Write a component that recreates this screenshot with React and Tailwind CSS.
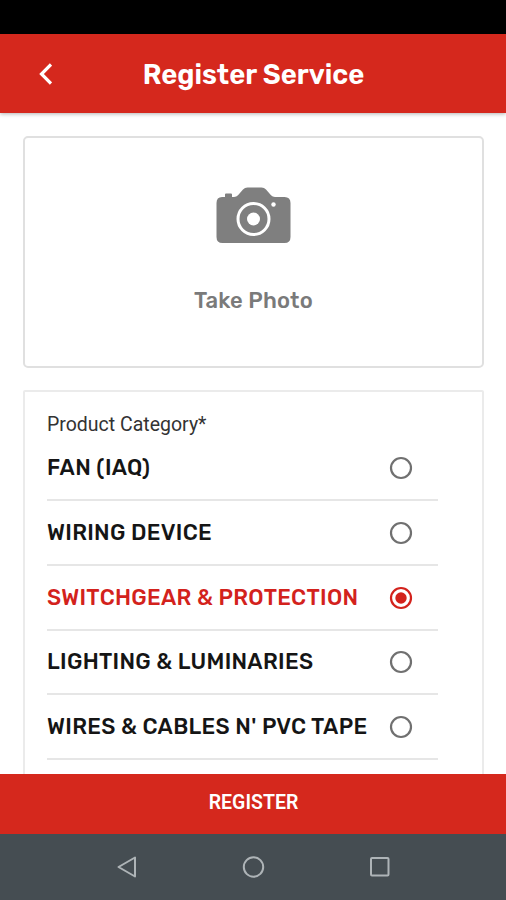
import { useState } from 'react';

const categories = [
  { id: 'fan', name: 'FAN (IAQ)' },
  { id: 'wiring', name: 'WIRING DEVICE' },
  { id: 'switchgear', name: 'SWITCHGEAR & PROTECTION' },
  { id: 'lighting', name: 'LIGHTING & LUMINARIES' },
  { id: 'wires', name: "WIRES & CABLES N' PVC TAPE" },
];

function CameraIcon() {
  return (
    <svg width="75" height="57" viewBox="0 0 75 57" aria-hidden="true">
      <path
        fill="#7f7f7f"
        d="M6 10H9V7.500Q9 6.500 10 6.500H15Q16 6.500 16 7.500V10H18Q20.500 10 22 8.300L27 2.500Q28.800 .5 31.500 .5H45.500Q48.200 .5 50 2.500L55 8.300Q56.500 10 59 10H68.500Q74.500 10 74.500 16V50Q74.500 56 68.500 56H6.500Q.5 56 .5 50V16Q.5 10 6 10Z"
      />
      <circle cx="37.500" cy="32" r="15.500" fill="none" stroke="#fff" strokeWidth="3" />
      <circle cx="37.500" cy="32" r="6.500" fill="#fff" />
      <circle cx="57.500" cy="17.500" r="2.200" fill="#fff" />
    </svg>
  );
}

function RadioIcon({ checked }) {
  const color = checked ? '#d3221c' : '#707070';
  return (
    <svg className="shrink-0" width="24" height="24" viewBox="0 0 24 24" aria-hidden="true">
      <circle cx="12" cy="12" r="10" fill="none" stroke={color} strokeWidth="2.200" />
      {checked && <circle cx="12" cy="12" r="5.700" fill={color} />}
    </svg>
  );
}

function CategoryRow({ category, checked, onSelect }) {
  return (
    <button
      type="button"
      role="radio"
      aria-checked={checked}
      onClick={onSelect}
      className="flex h-[64.7px] w-[391px] shrink-0 items-center justify-between border-b-2 border-[#e6e6e6] pt-px pr-[25px] text-left"
    >
      <span
        className={`text-[22px] leading-none font-medium tracking-[0.3px] whitespace-nowrap ${checked ? 'text-[#d3221c]' : 'text-[#151515]'}`}
      >
        {category.name}
      </span>
      <RadioIcon checked={checked} />
    </button>
  );
}

export default function App() {
  const [selected, setSelected] = useState('switchgear');

  return (
    <div className="flex h-[900px] w-[506px] flex-col overflow-hidden bg-white font-['Rubik','Roboto',sans-serif]">
      <div className="h-[34px] shrink-0 bg-black" />

      <header className="z-10 grid h-[79px] shrink-0 grid-cols-[90px_1fr_90px] items-center bg-[#d5281d] text-white shadow-[0_1px_4px_rgba(0,0,0,0.3)]">
        <button type="button" aria-label="Back" className="flex justify-center">
          <svg width="14" height="22" viewBox="0 0 14 22" fill="none" stroke="currentColor" strokeWidth="3.200">
            <path d="M13 1.500L3.500 11L13 20.500" />
          </svg>
        </button>
        <h1 className="pt-[2px] pl-px text-center text-[27.5px] leading-none font-semibold whitespace-nowrap">
          Register Service
        </h1>
      </header>

      <main className="flex min-h-0 flex-1 flex-col gap-[22px] overflow-hidden px-[23px] pt-[23px]">
        <button
          type="button"
          className="flex h-[232px] w-[461px] shrink-0 flex-col items-center rounded-[5px] border-2 border-[#e0e0e0] pt-[49px]"
        >
          <CameraIcon />
          <span className="mt-[46px] text-[22px] leading-none font-medium tracking-[0.2px] text-[#7a7a7a]">Take Photo</span>
        </button>

        <section className="flex h-[480px] w-[461px] shrink-0 flex-col rounded-[2px] border-2 border-[#ebebeb] pt-[22px] pl-[22px]">
          <p className="h-[22.5px] font-[Roboto] text-[19.5px] leading-[22px] text-[#333]">Product Category*</p>
          <div role="radiogroup" className="flex flex-col">
            {categories.map((category) => (
              <CategoryRow
                key={category.id}
                category={category}
                checked={selected === category.id}
                onSelect={() => setSelected(category.id)}
              />
            ))}
          </div>
        </section>
      </main>

      <button
        type="button"
        className="h-[60px] shrink-0 bg-[#d5281d] pb-[3px] pl-px font-[Roboto] text-[19.5px] leading-none font-semibold text-white"
      >
        REGISTER
      </button>

      <nav className="grid h-[66px] shrink-0 grid-cols-3 items-center bg-[#454d52] px-[63px] text-[#aeb4b7]">
        <svg className="mx-auto" width="22" height="24" viewBox="0 0 22 24" fill="none" stroke="currentColor" strokeWidth="2">
          <path d="M20 2.500V21.500L3.500 12Z" strokeLinejoin="round" />
        </svg>
        <svg className="mx-auto" width="24" height="24" viewBox="0 0 24 24" fill="none" stroke="currentColor" strokeWidth="2">
          <circle cx="12.500" cy="12" r="9.700" />
        </svg>
        <svg className="mx-auto" width="22" height="22" viewBox="0 0 22 22" fill="none" stroke="currentColor" strokeWidth="2">
          <rect x="2" y="2" width="17.500" height="17.500" rx="1" />
        </svg>
      </nav>
    </div>
  );
}
